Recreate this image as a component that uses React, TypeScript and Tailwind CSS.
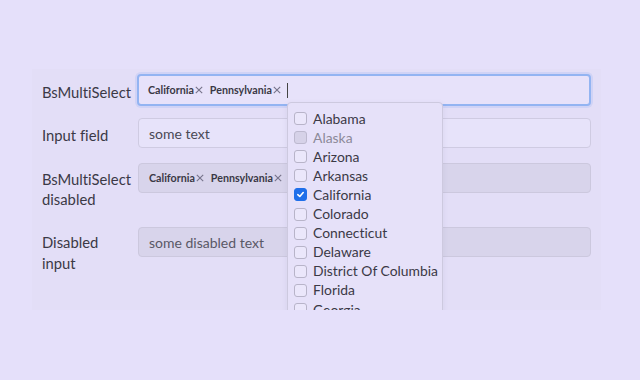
import React from "react";

const states = [
  { name: "Alabama" },
  { name: "Alaska", disabled: true },
  { name: "Arizona" },
  { name: "Arkansas" },
  { name: "California", checked: true },
  { name: "Colorado" },
  { name: "Connecticut" },
  { name: "Delaware" },
  { name: "District Of Columbia" },
  { name: "Florida" },
  { name: "Georgia" },
];

function Chip({ label }: { label: string }) {
  return (
    <span className="flex items-center mr-[7px] whitespace-nowrap">
      <span className="font-bold text-[10.7px] text-[#3a3845]">{label}</span>
      <svg width="8" height="8" viewBox="0 0 8 8" className="ml-[1px]">
        <path d="M0.8 0.8 L7.2 7.2 M7.2 0.8 L0.8 7.2" stroke="#76738a" strokeWidth="1.1" />
      </svg>
    </span>
  );
}

export default function App() {
  return (
    <div
      className="w-[640px] h-[380px] bg-[#e5e0fa] overflow-hidden pt-[69px] pl-[32px] [font-variant-ligatures:none]"
      style={{ fontFamily: 'Lato, "Noto Sans", sans-serif' }}
    >
      <div className="relative w-[569px] h-[241px] bg-[#e3def7] overflow-hidden pl-[10px] pr-[10px] pt-[5px] text-[#3b3946]">
        {/* row 1 */}
        <div className="flex items-start">
          <div className="w-[95px] shrink-0 pt-[8px] leading-[20px] text-[14.8px] whitespace-nowrap">BsMultiSelect</div>
          <div className="flex-1 h-[32px] rounded-[4px] border-2 border-[#93b4f2] bg-[#e7e2fa] shadow-[0_0_0_2px_rgba(150,180,245,0.25)] flex items-center pl-[9px]">
            <Chip label="California" />
            <Chip label="Pennsylvania" />
            <span className="w-[1px] h-[15px] bg-[#444] ml-[-1px]" />
          </div>
        </div>
        {/* row 2 */}
        <div className="flex items-start mt-[12px]">
          <div className="w-[96px] shrink-0 pt-[7px] leading-[20px] text-[14.8px] whitespace-nowrap">Input field</div>
          <div className="flex-1 h-[30px] rounded-[4px] border border-[#cfcbe2] bg-[#e7e3fa] flex items-center pl-[10px] text-[14px] text-[#4a4855]">
            some text
          </div>
        </div>
        {/* row 3 */}
        <div className="flex items-start mt-[15px]">
          <div className="w-[96px] shrink-0 pt-[6px] leading-[20px] text-[14.8px] whitespace-nowrap">
            BsMultiSelect
            <br />
            disabled
          </div>
          <div className="flex-1 h-[30px] rounded-[4px] border border-[#ccc8de] bg-[#d8d4eb] flex items-center pl-[10px]">
            <Chip label="California" />
            <Chip label="Pennsylvania" />
          </div>
        </div>
        {/* row 4 */}
        <div className="flex items-start mt-[18px]">
          <div className="w-[96px] shrink-0 pt-[5px] leading-[20.5px] text-[14.8px] whitespace-nowrap">
            Disabled
            <br />
            input
          </div>
          <div className="flex-1 h-[30px] rounded-[4px] border border-[#ccc8de] bg-[#d8d4eb] flex items-center pl-[10px] text-[14px] text-[#5a5866]">
            some disabled text
          </div>
        </div>

        {/* dropdown */}
        <div className="absolute left-[255px] top-[33px] w-[156px] h-[240px] bg-[#e6e1f9] border border-[#cdc9df] rounded-[4px] shadow-[0_2px_6px_rgba(80,70,120,0.08)] pt-[6px] pl-[6px]">
          {states.map((s) => (
            <div key={s.name} className="flex items-center h-[19.1px] whitespace-nowrap">
              <span
                className={
                  s.checked
                    ? "w-[13px] h-[13px] shrink-0 rounded-[3px] bg-[#1f6fea] border border-[#1f6fea] flex items-center justify-center"
                    : s.disabled
                    ? "w-[13px] h-[13px] shrink-0 rounded-[3px] bg-[#d6d2e8] border border-[#bdb9cf]"
                    : "w-[13px] h-[13px] shrink-0 rounded-[3px] bg-[#ebe7fb] border border-[#b8b4c9]"
                }
              >
                {s.checked && (
                  <svg width="9" height="9" viewBox="0 0 10 10">
                    <path d="M2 5.2 L4.2 7.2 L8 2.8" stroke="white" strokeWidth="1.8" fill="none" strokeLinecap="round" strokeLinejoin="round" />
                  </svg>
                )}
              </span>
              <span className={"ml-[6px] text-[13.9px] leading-none " + (s.disabled ? "text-[#8c8998]" : "text-[#3b3946]")}>
                {s.name}
              </span>
            </div>
          ))}
        </div>
      </div>
    </div>
  );
}
